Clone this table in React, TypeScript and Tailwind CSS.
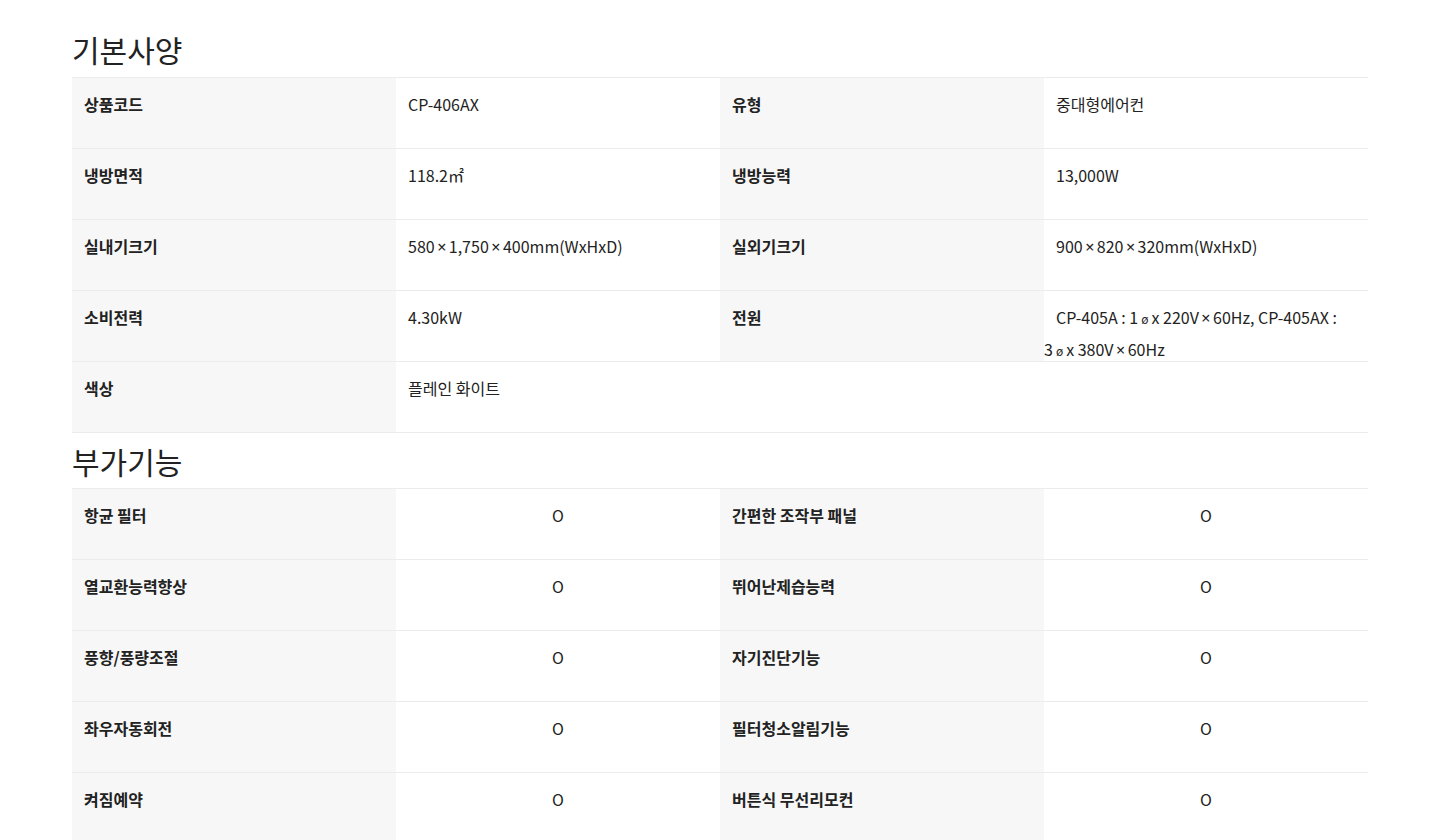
const font = { fontFamily: '"Noto Sans CJK KR", "Noto Sans", sans-serif' };

function X() {
  return <span className="mx-[2.5px]" style={{ fontFamily: '"Noto Sans", sans-serif' }}>×</span>;
}

function Phi() {
  return <span className="mx-[3px] text-[12px]">ø</span>;
}

type Spec = { label: string; value: React.ReactNode };

const basic: Spec[][] = [
  [
    { label: "상품코드", value: "CP-406AX" },
    { label: "유형", value: "중대형에어컨" },
  ],
  [
    { label: "냉방면적", value: "118.2㎡" },
    { label: "냉방능력", value: "13,000W" },
  ],
  [
    {
      label: "실내기크기",
      value: (
        <>
          580<X />1,750<X />400mm(WxHxD)
        </>
      ),
    },
    {
      label: "실외기크기",
      value: (
        <>
          900<X />820<X />320mm(WxHxD)
        </>
      ),
    },
  ],
  [
    { label: "소비전력", value: "4.30kW" },
    {
      label: "전원",
      value: (
        <>
          CP-405A : 1<Phi />x 220V<X />60Hz, CP-405AX :<br />
          3<Phi />x 380V<X />60Hz
        </>
      ),
    },
  ],
];

const extras: [string, string][] = [
  ["항균 필터", "간편한 조작부 패널"],
  ["열교환능력향상", "뛰어난제습능력"],
  ["풍향/풍량조절", "자기진단기능"],
  ["좌우자동회전", "필터청소알림기능"],
  ["켜짐예약", "버튼식 무선리모컨"],
];

function Label({ children }: { children: React.ReactNode }) {
  return (
    <div className="bg-[#f7f7f7] pl-3 pt-[10px] leading-[32px] text-[16px] font-semibold text-[#222]">
      {children}
    </div>
  );
}

function Value({ children, center }: { children: React.ReactNode; center?: boolean }) {
  return (
    <div
      className={`pt-[10px] leading-[32px] text-[16px] text-[#222] ${
        center ? "text-center" : "pl-3"
      }`}
    >
      {children}
    </div>
  );
}

export default function App() {
  return (
    <div className="min-h-[840px] bg-white pt-[21px]" style={font}>
      <div className="ml-[72px] w-[1296px]">
        <h2 className="h-[56px] leading-[56px] text-[30px] font-normal text-[#222]">기본사양</h2>
        <div className="border-b border-[#ececec]">
          {basic.map((row, i) => (
            <div key={i} className="grid grid-cols-4 grid-rows-[70px] border-t border-[#ececec]">
              <Label>{row[0].label}</Label>
              <Value>{row[0].value}</Value>
              <Label>{row[1].label}</Label>
              {row[1].label === "전원" ? (
                <div className="pt-[11px] leading-[31px] text-[16px] text-[#222] indent-3 whitespace-nowrap">
                  {row[1].value}
                </div>
              ) : (
                <Value>{row[1].value}</Value>
              )}
            </div>
          ))}
          <div className="grid grid-cols-4 grid-rows-[70px] border-t border-[#ececec]">
            <Label>색상</Label>
            <div className="col-span-3">
              <Value>플레인 화이트</Value>
            </div>
          </div>
        </div>

        <h2 className="h-[55px] leading-[56px] text-[30px] font-normal text-[#222]">부가기능</h2>
        <div>
          {extras.map(([a, b], i) => (
            <div key={i} className="grid grid-cols-4 grid-rows-[70px] border-t border-[#ececec]">
              <Label>{a}</Label>
              <Value center>O</Value>
              <Label>{b}</Label>
              <Value center>O</Value>
            </div>
          ))}
        </div>
      </div>
    </div>
  );
}
